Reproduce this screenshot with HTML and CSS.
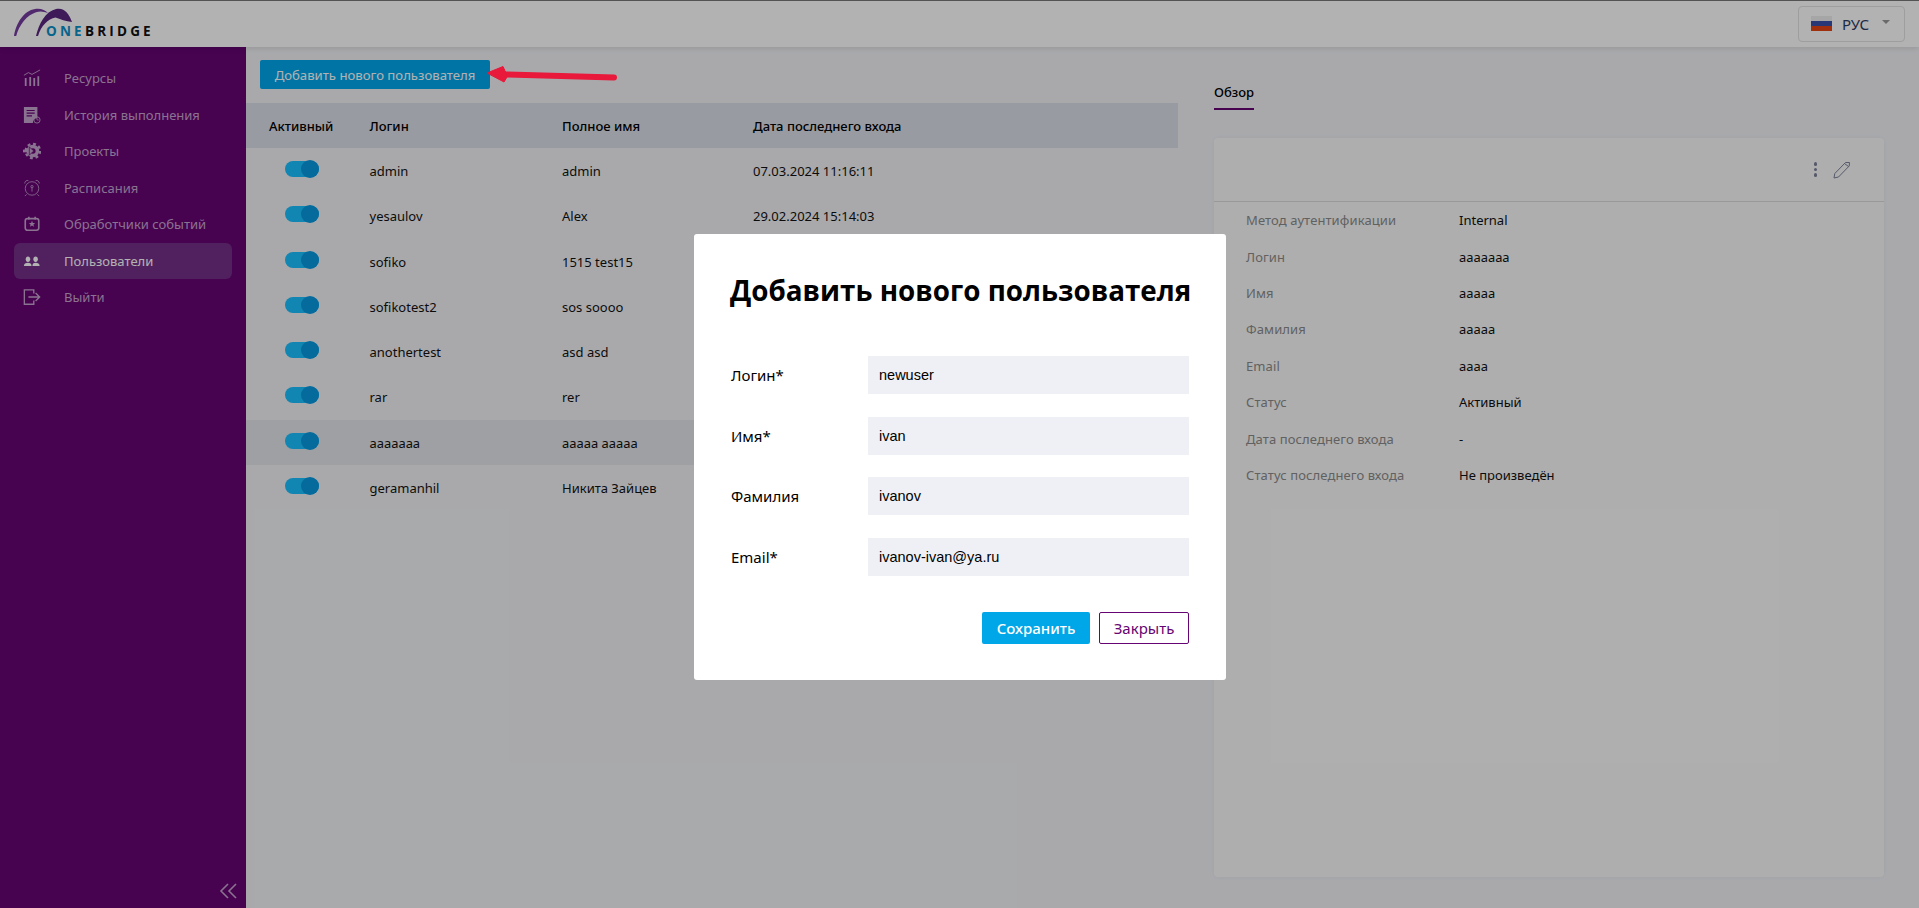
FILE: index.html
```html
<!DOCTYPE html>
<html lang="ru">
<head>
<meta charset="utf-8">
<title>OneBridge</title>
<link rel="stylesheet" href="styles.css">
</head>
<body>
<header class="topbar">
  <div class="logo">
    <svg class="logo-arcs" width="60" height="30" viewBox="0 0 60 30">
      <path d="M0 28C2 15 10 2.500 21 1C27 .2 31 2 34 5C30 3.500 26 3 22 4.200C13 7 5 17 2.200 28Z" fill="#743c9f"/>
      <path d="M22 28C25 16 31 3.500 42 1C50 -.8 55 5 58 14C52 13.500 46 11 41.500 9.500C34 10.500 27 18 24 28Z" fill="#5a2680"/>
    </svg>
    <span class="logo-text"><span class="logo-one">ONE</span>BRIDGE</span>
  </div>
  <button class="lang" type="button">
    <span class="flag"><i class="flag-w"></i><i class="flag-b"></i><i class="flag-r"></i></span>
    <span class="lang-text">РУС</span>
    <span class="caret"></span>
  </button>
</header>
<div class="layout">
  <nav class="sidebar">
    <a class="nav-item">
      <svg class="nav-icon" viewBox="0 0 20 20"><path d="M1 7L6 4L10 6L19 1" fill="none" stroke="currentColor"/><path d="M2 10h2v9H2zM7 9h2v10H7zM11.500 10h2v9h-2zM16 8h2v11h-2z" fill="currentColor"/></svg>
      <span>Ресурсы</span>
    </a>
    <a class="nav-item">
      <svg class="nav-icon" viewBox="0 0 20 20"><path d="M1 1h15v12.500A5 5 0 0 0 11 19H1z" fill="currentColor"/><path d="M4 5h9M4 8h9M4 11h6" stroke="#660473" stroke-width="1.300"/><circle cx="15.500" cy="15.500" r="3.500" fill="none" stroke="currentColor"/><path d="M15.500 13.500v2h2" fill="none" stroke="currentColor" stroke-width=".8"/></svg>
      <span>История выполнения</span>
    </a>
    <a class="nav-item">
      <svg class="nav-icon" viewBox="0 0 20 20" fill="none" stroke="currentColor"><circle cx="11" cy="10" r="5" stroke-width="4"/><circle cx="11" cy="10" r="8" stroke-width="2.600" stroke-dasharray="3.200 3.080"/><path d="M0 10h7.500" stroke-width="3"/><path d="M7 5.500l5 4.500-5 4.500z" fill="currentColor" stroke="#660473" stroke-width=".8"/></svg>
      <span>Проекты</span>
    </a>
    <a class="nav-item">
      <svg class="nav-icon" viewBox="0 0 20 20" fill="none" stroke="currentColor" stroke-width=".9"><circle cx="10" cy="10.500" r="7.500"/><path d="M2 5A3 3 0 0 1 6 1.800M18 5a3 3 0 0 0-4-3.200M4 17l-2 2M16 17l2 2"/><circle cx="10" cy="8.500" r="1.300"/><path d="M10 9.500V14"/></svg>
      <span>Расписания</span>
    </a>
    <a class="nav-item">
      <svg class="nav-icon" viewBox="0 0 20 20"><rect x="2.500" y="4" width="15" height="13" rx="2.500" fill="none" stroke="currentColor" stroke-width="1.800"/><path d="M6.500 2v3M13.500 2v3" stroke="currentColor" stroke-width="1.800"/><path d="M10 6.500l1 2.300 2.500.2-1.900 1.600.6 2.400-2.200-1.300-2.200 1.300.6-2.400-1.900-1.600 2.500-.2z" fill="currentColor"/></svg>
      <span>Обработчики событий</span>
    </a>
    <a class="nav-item nav-active">
      <svg class="nav-icon" viewBox="0 0 20 20"><path d="M5.500 5c1.500 0 2.500 1.200 2.500 3S7 11 5.500 11 3 9.800 3 8s1-3 2.500-3z" fill="currentColor"/><path d="M1 15.500c0-2.500 2-3.500 4.500-3.500s4 1 4 3.500z" fill="currentColor"/><path d="M14 5c1.500 0 2.500 1.200 2.500 3S15.500 11 14 11s-2.500-1.200-2.500-3S12.500 5 14 5z" fill="currentColor"/><path d="M10.500 15.500c0-2.500 1-3.500 3.500-3.500s4.500 1 4.500 3.500z" fill="currentColor"/></svg>
      <span>Пользователи</span>
    </a>
    <a class="nav-item">
      <svg class="nav-icon" viewBox="0 0 20 20" fill="none" stroke="currentColor" stroke-width="1.500"><path d="M12 6V2H1.500v16H12v-4"/><path d="M6 10h12M14 5.500l4.500 4.500-4.500 4.500"/></svg>
      <span>Выйти</span>
    </a>
    <svg class="collapse" width="18" height="16" viewBox="0 0 18 16" fill="none" stroke="currentColor" stroke-width="1.600"><path d="M9 1L2 8l7 7M17 1l-7 7 7 7"/></svg>
  </nav>
  <main class="content">
    <section class="users">
      <div class="toolbar"><button class="add-btn" type="button">Добавить нового пользователя</button></div>
      <div class="row row-head">
        <span>Активный</span><span>Логин</span><span>Полное имя</span><span>Дата последнего входа</span>
      </div>
      <div class="row"><span class="switch"></span><span>admin</span><span>admin</span><span>07.03.2024 11:16:11</span></div>
      <div class="row"><span class="switch"></span><span>yesaulov</span><span>Alex</span><span>29.02.2024 15:14:03</span></div>
      <div class="row"><span class="switch"></span><span>sofiko</span><span>1515 test15</span><span></span></div>
      <div class="row"><span class="switch"></span><span>sofikotest2</span><span>sos soooo</span><span></span></div>
      <div class="row"><span class="switch"></span><span>anothertest</span><span>asd asd</span><span></span></div>
      <div class="row"><span class="switch"></span><span>rar</span><span>rer</span><span></span></div>
      <div class="row row-selected"><span class="switch"></span><span>ааааааа</span><span>ааааа ааааа</span><span></span></div>
      <div class="row"><span class="switch"></span><span>geramanhil</span><span>Никита Зайцев</span><span></span></div>
    </section>
    <aside class="details">
      <div class="tabs"><span class="tab">Обзор</span></div>
      <div class="card">
        <div class="card-head">
          <span class="dots"><i></i><i></i><i></i></span>
          <svg class="pencil" width="18" height="18" viewBox="0 0 18 18" fill="none" stroke="currentColor"><path d="M1 17l.8-4.500L12.500 1.500l4 0-.3 3.500L5.500 16z"/><path d="M11.500 2.500l4 3"/></svg>
        </div>
        <dl class="props">
          <div class="prop"><dt>Метод аутентификации</dt><dd>Internal</dd></div>
          <div class="prop"><dt>Логин</dt><dd>ааааааа</dd></div>
          <div class="prop"><dt>Имя</dt><dd>ааааа</dd></div>
          <div class="prop"><dt>Фамилия</dt><dd>ааааа</dd></div>
          <div class="prop"><dt>Email</dt><dd>аааа</dd></div>
          <div class="prop"><dt>Статус</dt><dd>Активный</dd></div>
          <div class="prop"><dt>Дата последнего входа</dt><dd>-</dd></div>
          <div class="prop"><dt>Статус последнего входа</dt><dd>Не произведён</dd></div>
        </dl>
      </div>
    </aside>
  </main>
</div>
<div class="overlay"></div>
<svg class="annotation" width="132" height="24" viewBox="0 0 132 24"><path d="M128 14.500L20 11.500" stroke="#e8193a" stroke-width="6" stroke-linecap="round" fill="none"/><path d="M1 10L17 3.500 20 10 21 14 18 19z" fill="#e8193a" stroke="#e8193a" stroke-linejoin="round"/></svg>
<form class="modal">
  <h2 class="modal-title">Добавить нового пользователя</h2>
  <div class="field"><label>Логин*</label><input type="text" value="newuser"></div>
  <div class="field"><label>Имя*</label><input type="text" value="ivan"></div>
  <div class="field"><label>Фамилия</label><input type="text" value="ivanov"></div>
  <div class="field"><label>Email*</label><input type="text" value="ivanov-ivan@ya.ru"></div>
  <div class="modal-actions">
    <button class="btn-save" type="button">Сохранить</button>
    <button class="btn-close" type="button">Закрыть</button>
  </div>
</form>
</body>
</html>
```

FILE: styles.css
```css
* { box-sizing: border-box; }
html, body { margin: 0; height: 100%; }
body {
  width: 1919px;
  height: 908px;
  overflow: hidden;
  position: relative;
  font-family: "Noto Sans", "Open Sans", sans-serif;
  font-size: 13px;
  color: #111;
  background: #f2f3f7;
  display: flex;
  flex-direction: column;
}
.topbar {
  height: 47px;
  flex: none;
  background: #fff;
  border-top: 1px solid #777;
  display: flex;
  align-items: center;
  justify-content: space-between;
  padding: 0 14px 0 14px;
  box-shadow: 0 1px 6px rgba(0,0,0,.12);
  position: relative;
  z-index: 1;
}
.logo { position: relative; width: 140px; height: 40px; margin-top: -3px; }
.logo-arcs { position: absolute; left: 0; top: 5px; }
.logo-text {
  position: absolute;
  left: 32px;
  top: 19px;
  font-family: "Open Sans", sans-serif;
  font-weight: 700;
  font-size: 13.500px;
  letter-spacing: 3.200px;
  color: #111;
}
.logo-one { color: #0b90c8; }
.lang {
  width: 107px;
  height: 36px;
  margin-top: -1px;
  background: #fff;
  border: 1px solid #e2e2e2;
  border-radius: 4px;
  display: flex;
  align-items: center;
  padding: 0 0 0 12px;
  font-family: "Noto Sans", sans-serif;
  color: #2d3d63;
  font-size: 15px;
}
.flag { width: 21px; height: 15px; display: flex; flex-direction: column; }
.flag i { flex: 1; display: block; }
.flag-w { background: #eeeeee; }
.flag-b { background: #3a4fa8; }
.flag-r { background: #e44413; }
.lang-text { margin-left: 10px; }
.caret {
  margin-left: 13px;
  margin-top: -3px;
  border-left: 4px solid transparent;
  border-right: 4px solid transparent;
  border-top: 4px solid #999;
}
.layout { flex: 1; display: flex; min-height: 0; }
.sidebar {
  width: 246px;
  flex: none;
  background: #660473;
  padding: 13px 14px 9px;
  display: flex;
  flex-direction: column;
  color: #c6a5d0;
}
.nav-item {
  height: 36.500px;
  display: flex;
  align-items: center;
  flex: none;
  padding-left: 9px;
  border-radius: 6px;
  font-size: 13px;
}
.nav-icon { width: 18px; height: 18px; flex: none; margin-right: 23px; }
.nav-active { background: #742e88; color: #fff; }
.collapse { margin-top: auto; align-self: flex-end; margin-right: -5px; color: #c6a5d0; flex: none; }
.content { flex: 1; display: flex; min-width: 0; }
.users { width: 932px; flex: none; }
.toolbar { padding: 13px 14px 14px; }
.add-btn {
  width: 230px;
  height: 29px;
  border: 0;
  border-radius: 2px;
  background: #00a7ec;
  color: #fff;
  font-family: "Noto Sans", sans-serif;
  font-size: 13.150px;
  padding: 0;
}
.row {
  height: 45.300px;
  display: grid;
  grid-template-columns: 100.500px 192.500px 191px 1fr;
  align-items: center;
  padding-left: 23px;
}
.row-head { background: #dcdfe9; font-weight: 500; color: #000; }
.row-selected { background: #e4e5ea; }
.switch {
  display: block;
  width: 34px;
  height: 16px;
  margin: -4px 0 0 16px;
  border-radius: 8px;
  background: #19c0ff;
  position: relative;
}
.switch::after {
  content: "";
  position: absolute;
  right: 0;
  top: -1px;
  width: 18px;
  height: 18px;
  border-radius: 50%;
  background: #0898e0;
}
.details { flex: 1; padding: 0 35px 0 36px; display: flex; flex-direction: column; }
.tabs { padding-top: 35px; height: 63px; }
.tab {
  display: inline-block;
  height: 28px;
  line-height: 20px;
  border-bottom: 2px solid #660473;
  font-weight: 500;
  color: #000;
}
.card {
  margin-top: 28px;
  height: 739px;
  background: #fafafa;
  border-radius: 4px;
  box-shadow: 0 0 5px rgba(0,0,0,.05);
}
.card-head {
  height: 64px;
  border-bottom: 1px solid #dcdcdc;
  display: flex;
  align-items: center;
  justify-content: flex-end;
  padding: 0 33px 0 0;
  color: #7a8099;
}
.dots { display: flex; flex-direction: column; gap: 2px; margin-right: 16px; }
.dots i { display: block; width: 3.500px; height: 3.500px; border-radius: 50%; background: #7a8099; }
.props { margin: 0; }
.prop { height: 36.400px; display: flex; align-items: center; padding-left: 32px; }
.prop dt { width: 213px; color: #8c8c8c; letter-spacing: .1px; }
.prop dd { margin: 0; color: #111; }
.overlay { position: absolute; inset: 0; background: rgba(0,0,0,.3); z-index: 2; }
.annotation { position: absolute; left: 486px; top: 63px; z-index: 3; }
.modal {
  position: absolute;
  left: 694px;
  top: 234px;
  width: 532px;
  height: 446px;
  background: #fff;
  border-radius: 3px;
  padding: 34px 37px 0 36px;
  z-index: 3;
  color: #000;
}
.modal-title {
  margin: 0 0 44px;
  font-family: "Open Sans", sans-serif;
  font-size: 27.800px;
  font-weight: 700;
  line-height: 44px;
  white-space: nowrap;
}
.field { display: flex; align-items: center; height: 38px; margin-bottom: 22.670px; }
.field label { width: 138px; font-size: 15px; padding-left: 1px; }
.field input {
  flex: 1;
  min-width: 0;
  height: 38px;
  border: 0;
  background: #eff0f5;
  padding: 0 11px;
  font-family: "Liberation Sans", sans-serif;
  font-size: 14.500px;
  color: #000;
  border-radius: 0;
}
.modal-actions { display: flex; justify-content: flex-end; gap: 9px; margin-top: 36px; }
.modal-actions button {
  height: 32px;
  border-radius: 2px;
  font-family: "Noto Sans", sans-serif;
  font-size: 15px;
  padding: 0;
}
.btn-save { width: 108px; border: 0; background: #00a7e8; color: #fff; font-weight: 500; }
.btn-close { width: 90px; border: 1px solid #660473; background: #fff; color: #660473; }
```
